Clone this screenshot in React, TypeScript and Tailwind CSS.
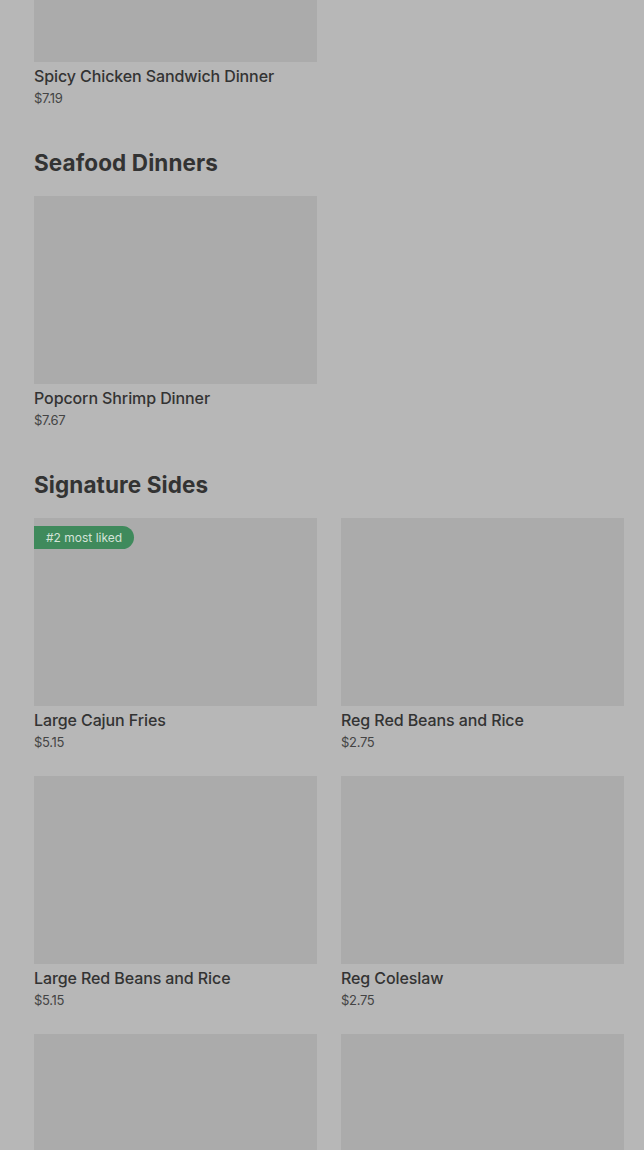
const font = { fontFamily: "Inter, 'Noto Sans', sans-serif" }

interface Item {
  name: string
  price: string
  badge?: string
}

interface Section {
  title?: string
  items: Item[]
}

const sections: Section[] = [
  { items: [{ name: "Spicy Chicken Sandwich Dinner", price: "$7.19" }] },
  { title: "Seafood Dinners", items: [{ name: "Popcorn Shrimp Dinner", price: "$7.67" }] },
  {
    title: "Signature Sides",
    items: [
      { name: "Large Cajun Fries", price: "$5.15", badge: "#2 most liked" },
      { name: "Reg Red Beans and Rice", price: "$2.75" },
      { name: "Large Red Beans and Rice", price: "$5.15" },
      { name: "Reg Coleslaw", price: "$2.75" },
      { name: "Large Coleslaw", price: "$5.15" },
      { name: "Reg Mashed Potatoes", price: "$2.75" },
    ],
  },
]

function ItemCard({ item }: { item: Item }) {
  return (
    <div className="flex flex-col h-[234px]">
      <div className="relative h-[188px] bg-[#ababab]">
        {item.badge && (
          <span className="absolute top-[8px] left-0 h-[23px] pl-[12px] pr-[12px] flex items-center rounded-r-full bg-[#3f8a5c] text-[#d3e3d8] text-[12px]">
            {item.badge}
          </span>
        )}
      </div>
      <div className="mt-[2px] h-[24px] leading-[24px] text-[16px] font-medium text-[#333333] tracking-[-0.1px]">
        {item.name}
      </div>
      <div className="h-[20px] leading-[20px] text-[13px] text-[#444444] tracking-[-0.3px]">{item.price}</div>
    </div>
  )
}

export default function App() {
  return (
    <div className="min-h-screen bg-[#b7b7b7] overflow-hidden" style={font}>
      <div className="-mt-[126px] pl-[34px] pr-[20px] flex flex-col gap-[41px] pb-[40px]">
        {sections.map((s, i) => (
          <section key={i} className="flex flex-col">
            {s.title && (
              <h2 className="h-[28px] leading-[28px] mb-[19px] text-[22.5px] font-bold text-[#333333] tracking-[0.1px]">
                {s.title}
              </h2>
            )}
            <div className="grid grid-cols-2 gap-x-[24px] gap-y-[24px]">
              {s.items.map((it) => (
                <ItemCard key={it.name} item={it} />
              ))}
            </div>
          </section>
        ))}
      </div>
    </div>
  )
}
